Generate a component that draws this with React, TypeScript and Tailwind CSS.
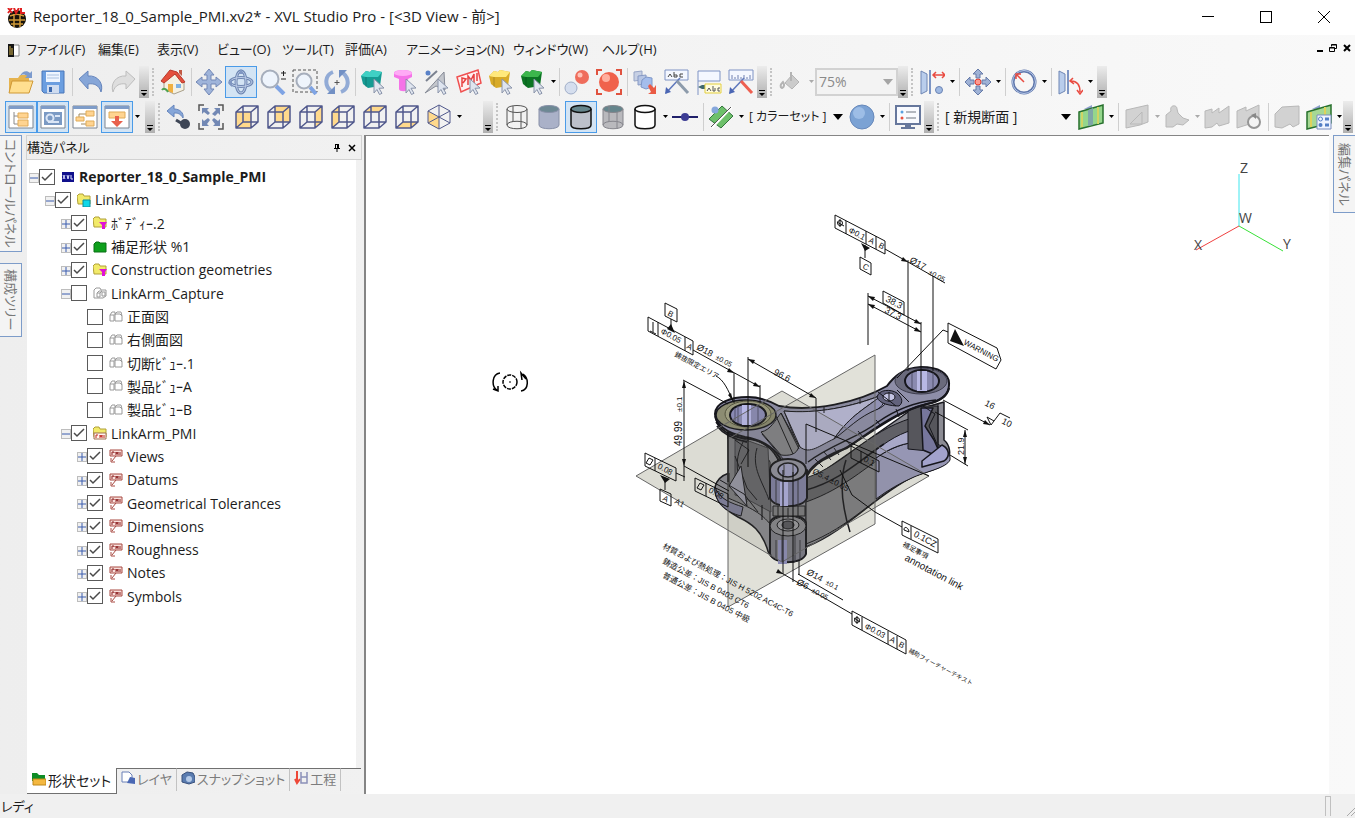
import type { ReactNode } from 'react';

const FONT = "font-['Open_Sans','Noto_Sans_CJK_JP',sans-serif]";

/* ---------- toolbar building blocks ---------- */

const Svg = ({ children }: { children: ReactNode }) => (
  <svg viewBox="0 0 26 26" className="size-[26px]" fill="none" aria-hidden="true">
    {children}
  </svg>
);

interface ToolProps {
  label: string;
  on?: boolean;
  children: ReactNode;
}

const Tool = ({ label, on, children }: ToolProps) => (
  <button
    type="button"
    aria-label={label}
    aria-pressed={on}
    className={
      on
        ? 'flex h-8 w-8 shrink-0 items-center justify-center border border-[#4a9be8] bg-[#d3e4f4]'
        : 'flex h-8 w-8 shrink-0 items-center justify-center'
    }
  >
    <Svg>{children}</Svg>
  </button>
);

const Sep = ({ wide }: { wide?: boolean }) => (
  <span className={wide ? 'flex h-7 w-[6px] shrink-0 justify-center' : 'flex h-7 w-1 shrink-0 justify-center'}>
    <span className="w-px bg-[#cfcfcf]" />
  </span>
);

const Grip = () => (
  <span className="flex h-7 w-2 shrink-0 justify-center">
    <span className="border-l-2 border-dotted border-[#c4c4c4]" />
  </span>
);

const Drop = ({ off }: { off?: boolean }) => (
  <button type="button" aria-label="More" className="flex h-8 w-2 shrink-0 items-center justify-center">
    <svg viewBox="0 0 5 3" className="h-[3px] w-[5px]" aria-hidden="true">
      <path d="M0 0h5L2.500 3z" fill={off ? '#aaa' : '#000'} />
    </svg>
  </button>
);

const Overflow = () => (
  <button
    type="button"
    aria-label="Toolbar options"
    className="flex h-8 w-[10px] shrink-0 items-end justify-center bg-linear-to-b from-[#ececec] to-[#b0b0b0] pb-[2px]"
  >
    <svg viewBox="0 0 6 6" className="size-[6px]" aria-hidden="true">
      <path d="M0 0h6v1H0zM0 3h6L3 6z" fill="#000" />
    </svg>
  </button>
);

const Caret = ({ off }: { off?: boolean }) => (
  <svg viewBox="0 0 10 6" className="pointer-events-none h-[6px] w-[10px] shrink-0" aria-hidden="true">
    <path d="M0 0h10L5 6z" fill={off ? '#a5a5a5' : '#000'} />
  </svg>
);

/* ---------- icon fragments ---------- */

const Pointer = () => (
  <path d="M14 10l10 9-5 .3 3 5-2.500 1.200-2.600-5L14 24z" fill="#dfe5ef" stroke="#8a94aa" />
);

const Block = ({ top, side }: { top: string; side: string }) => (
  <>
    <path d="M1 7l5-5 4 1 2-2 10 2-2 14-12 2-5-4z" fill={side} />
    <path d="M1 7l5-5 4 1 2-2 10 2-4 5H6z" fill={top} />
    <path d="M6 8v10" stroke="#0003" />
    <Pointer />
  </>
);

const Cube = ({ fill }: { fill: string }) => (
  <>
    <path d={fill} fill="#ffd98c" />
    <path
      d="M2 8h15v16H2zM2 8l7-6h15v16l-7 6M17 8l7-6M9 2v16h15M9 18l-7 6"
      stroke="#50588c"
      strokeWidth="1.500"
      strokeLinejoin="round"
    />
  </>
);

interface CylinderProps {
  body: string;
  top: string;
  line: string;
  heavy?: boolean;
  hidden?: boolean;
}

const Cylinder = ({ body, top, line, heavy, hidden }: CylinderProps) => (
  <>
    <path d="M3 5v16c0 5 20 5 20 0V5z" fill={body} />
    <ellipse cx="13" cy="5" rx="10" ry="3.500" fill={top} />
    <g stroke={line} strokeWidth={heavy ? 1.5 : 1}>
      <path d="M3 5v16c0 5 20 5 20 0V5" />
      <ellipse cx="13" cy="5" rx="10" ry="3.500" />
      {hidden && <path d="M3 21c0-5 20-5 20 0M9 2v16M17 8v17" />}
    </g>
  </>
);

const Pane = ({ children }: { children: ReactNode }) => (
  <>
    <path d="M1 2h24v22H1z" fill="#fff" stroke="#7d8591" />
    <path d="M1 2h24v3H1z" fill="#7e9cc8" />
    {children}
  </>
);

const Ghost = ({ d }: { d: string }) => (
  <path d={d} fill="#d2d2d2" stroke="#b8b8b8" strokeLinejoin="round" />
);

const Mirror = () => (
  <>
    <path d="M2 2l6 3v17l-6 3z" fill="#b9cdec" stroke="#6e86b4" />
    <path d="M10 1h2v24h-2z" fill="#7d95c4" />
  </>
);

const fourWay = 'M13 0l5 6h-3v5h5V8l6 5-6 5v-3h-5v5h3l-5 6-5-6h3v-5H6v3l-6-5 6-5v3h5V6H8z';

const RowOne = () => (
  <div className="flex h-[33px] items-center pl-[5px]">
    <Tool label="開く">
      <path d="M1 9h9l2-3h9v17H1z" fill="#e6b450" />
      <path d="M4 12h21l-4 12H1z" fill="#ffdf90" stroke="#cf9835" />
      <path d="M12 7c2-5 7-6 10-3l2-2v7h-7l2-2c-2-2-5-2-7 0z" fill="#7c9bce" />
    </Tool>
    <Tool label="保存">
      <path d="M2 2h22v22H4l-2-2z" fill="#6b9ee0" stroke="#4a76b8" />
      <path d="M6 3h14v10H6z" fill="#eef5ff" />
      <path d="M7 6h12M7 9h12" stroke="#a9c0e0" />
      <path d="M7 16h12v8H7z" fill="#cfdcf0" />
      <path d="M9 18h3v5H9z" fill="#3c68ad" />
    </Tool>
    <Sep wide />
    <Tool label="元に戻す">
      <path d="M1 10l9-8v5c10-1 16 8 13 16-2-7-7-9-13-8v5z" fill="#86a6d8" stroke="#6484bc" />
    </Tool>
    <Tool label="やり直す">
      <path d="M25 10l-9-8v5C6 6 0 15 3 23c2-7 7-9 13-8v5z" fill="#dedede" stroke="#bdbdbd" />
    </Tool>
    <Overflow />
    <Grip />
    <Tool label="ホーム">
      <path d="M4 12l8-9 12 9v9l-10 4-10-5z" fill="#f5f1e2" stroke="#a9a08a" />
      <path d="M1 12L10 1l7 2 8 10-3 1-7-9-11 9z" fill="#e4503c" stroke="#b83a2c" />
      <path d="M19 1h3v6l-3-3z" fill="#c25a44" />
      <path d="M8 15h5v9l-5-2z" fill="#f0b040" />
      <path d="M16 15h5v4h-5z" fill="#7fb2e4" />
      <path d="M2 21c2-3 5 0 6 2" stroke="#4fa352" strokeWidth="2" />
    </Tool>
    <Sep />
    <Tool label="移動">
      <path d={fourWay} fill="#9fb4da" stroke="#7287b5" />
    </Tool>
    <Tool label="回転" on>
      <g strokeWidth="3" stroke="#6f87b2">
        <ellipse cx="13" cy="13" rx="11" ry="4.500" />
        <ellipse cx="13" cy="13" rx="5" ry="11" />
      </g>
      <g stroke="#bdcde8">
        <ellipse cx="13" cy="13" rx="11" ry="4.500" />
        <ellipse cx="13" cy="13" rx="5" ry="11" />
      </g>
      <path d="M10 5l3-5 3 5zM4 10l-4 4 4 4z" fill="#7f96c2" />
    </Tool>
    <Tool label="ズーム">
      <path d="M16 17l8 8" stroke="#7fa4e4" strokeWidth="4" />
      <circle cx="10" cy="10" r="8.500" fill="#eef4fc" stroke="#a6aebc" strokeWidth="2" />
      <path d="M21 4h5M23.500 2v5M21 10h5" stroke="#222" />
    </Tool>
    <Tool label="範囲ズーム">
      <path d="M1 1h24v22H1z" stroke="#555" strokeDasharray="3 2" />
      <path d="M18 18l6 7" stroke="#7fa4e4" strokeWidth="4" />
      <circle cx="12" cy="12" r="7.500" fill="#eef4fc" stroke="#a6aebc" strokeWidth="2" />
    </Tool>
    <Tool label="回す">
      <path d="M9 3C1 6 0 16 7 22M17 23c8-3 9-13 2-19" stroke="#92abd6" strokeWidth="4" />
      <path d="M3 25h8v-8zM23 1h-8v8z" fill="#7290c4" />
      <path d="M13 11v5M10.500 13.500h5" stroke="#555" />
    </Tool>
    <Sep />
    <Tool label="パーツ選択">
      <Block top="#3fd0c4" side="#159b93" />
    </Tool>
    <Tool label="ボディ選択">
      <path d="M2 4c0-4 18-4 18 0v4l-4 2v10c0 3-9 3-9 0V10L2 8z" fill="#f573e8" />
      <ellipse cx="11" cy="4" rx="9" ry="3" fill="#ffaaf6" />
      <Pointer />
    </Tool>
    <Tool label="面選択">
      <path d="M1 24L20 3l1 18-9-4z" fill="#c3c6cc" stroke="#858a96" />
      <path d="M2 12L13 2" stroke="#7b8290" strokeWidth="2" />
      <circle cx="4" cy="4" r="2.500" fill="#5a82c8" />
      <Pointer />
    </Tool>
    <Tool label="PMI選択">
      <path d="M1 8l21-7 3 13-20 9z" fill="#fff0f0" stroke="#f05050" strokeWidth="1.500" />
      <path d="M6 18V9l4 1-3 4M12 16V7l3 4 3-6v9M21 4v8" stroke="#e84040" strokeWidth="1.500" />
      <Pointer />
    </Tool>
    <Tool label="グループ選択">
      <Block top="#ffe97c" side="#d8ab28" />
    </Tool>
    <Tool label="形状選択">
      <Block top="#3cb64c" side="#0b7423" />
    </Tool>
    <Drop />
    <Sep />
    <Tool label="表示切替">
      <circle cx="18" cy="8" r="7" fill="#ef6d5c" />
      <circle cx="16" cy="6" r="2.500" fill="#ffc3b8" />
      <circle cx="7" cy="19" r="6" fill="#d5deee" stroke="#a0aec8" />
    </Tool>
    <Tool label="干渉">
      <circle cx="13" cy="13" r="10" fill="#f0624c" />
      <circle cx="10" cy="9" r="4" fill="#ffae9e" />
      <path d="M1 6V1h5M20 1h5v5M25 20v5h-5M6 25H1v-5" stroke="#e0523f" strokeWidth="2" />
    </Tool>
    <Sep />
    <Tool label="コピー配置">
      <path d="M2 3l8-1v9l-8 1z" fill="#c7d0e4" stroke="#97a5c6" />
      <path d="M6 7l8-1v9l-8 1z" fill="#b6c5e4" stroke="#8699c4" />
      <path d="M10 11l4-3 6 1v9l-6 2-5-2z" fill="#a4bdec" stroke="#7f97c8" />
      <path d="M16 17l2-2 4 4 2-3v9h-8l3-2z" fill="#ea5b45" />
    </Tool>
    <Tool label="注記">
      <path d="M1 1h23v10H1z" fill="#f4f7ff" stroke="#7f93c4" />
      <path d="M4 8l2-3 2 3M10 3v5h3V6h-3M19 5h-3v3h3" stroke="#444" />
      <path d="M2 24L16 9" stroke="#5f78bc" strokeWidth="1.500" />
      <path d="M1 25l1-7 5 5z" fill="#4b66b4" />
      <path d="M13 12l11 12" stroke="#8d9bab" strokeWidth="3" />
    </Tool>
    <Tool label="ラベル">
      <path d="M2 2h22v10H2z" fill="#f4f7ff" />
      <path d="M2 26V2h22v10H2" stroke="#7f93c4" />
      <path d="M2 18l4-2h3v4H6z" fill="#40686e" />
      <path d="M9 15h16v9H9z" fill="#fffce0" stroke="#e4cf3c" />
      <path d="M11 22l2-3 2 3M17 17v5h2v-3M24 19h-2v3h2" stroke="#555" />
    </Tool>
    <Tool label="寸法">
      <path d="M1 1h24v10H1z" fill="#f4f7ff" stroke="#7f93c4" />
      <path d="M4 10V6M7 10V8M10 10V6M13 10V8M16 10V6M19 10V8M22 10V6" stroke="#7080b0" />
      <path d="M2 24L16 9" stroke="#5f78bc" strokeWidth="1.500" />
      <path d="M1 25l1-7 5 5z" fill="#4b66b4" />
      <path d="M13 12l11 12" stroke="#ee5f50" strokeWidth="3" />
    </Tool>
    <Overflow />
    <Grip />
    <Tool label="塗りつぶし">
      <path d="M7 14l7-8 7 7-7 7z" fill="#cbcbcb" stroke="#b4b4b4" />
      <path d="M13 3v9M5 13c-3 3-3 5-1 6 2-1 3-3 1-6z" stroke="#b4b4b4" strokeWidth="2" />
    </Tool>
    <Drop off />
    <label className="relative flex h-7 w-[83px] shrink-0 items-center border-2 border-[#d2d2d2] bg-[#f3f3f3]">
      <span className="sr-only">透過率</span>
      <select
        disabled
        className="h-6 w-full appearance-none bg-transparent pl-[2px] text-[14px] leading-6 text-[#8a8a8a] opacity-100"
      >
        <option>75%</option>
      </select>
      <span className="pointer-events-none absolute right-[3px]">
        <Caret off />
      </span>
    </label>
    <Overflow />
    <Grip />
    <Tool label="面間距離">
      <Mirror />
      <path d="M15 6h10M17 3l-3 3 3 3M23 3l3 3-3 3" stroke="#e94b41" strokeWidth="1.500" />
      <circle cx="20" cy="21" r="3.500" fill="#9fb9e2" stroke="#6b83b4" />
    </Tool>
    <Drop />
    <Sep wide />
    <Tool label="位置">
      <path
        d="M13 0l5 5h-3v4h-4V5H8zM13 26l-5-5h3v-4h4v4h3zM0 13l5-5v3h4v4H5v3zM26 13l-5-5v3h-4v4h4v3z"
        fill="#9fb2d6"
        stroke="#667ba8"
      />
      <circle cx="13" cy="13" r="3" fill="#ff9a90" stroke="#e43c30" />
    </Tool>
    <Drop />
    <Sep wide />
    <Tool label="半径">
      <circle cx="13" cy="13" r="11" stroke="#5f77ac" strokeWidth="3" />
      <circle cx="13" cy="13" r="11.500" stroke="#b8c9e8" />
      <path d="M13 13L6 6M5 10V5h5" stroke="#e94b41" strokeWidth="1.500" />
    </Tool>
    <Drop />
    <Sep wide />
    <Tool label="角度">
      <Mirror />
      <path d="M14 12c6 0 9 4 9 11M16 9l-3 3 4 3M20 21l3 4 3-4" stroke="#e94b41" strokeWidth="1.500" />
    </Tool>
    <Drop />
    <span className="w-[3px] shrink-0" />
    <Overflow />
  </div>
);

const RowTwo = () => (
  <div className="flex h-[36px] items-center pt-px pl-[5px]">
    <Tool label="ツリー" on>
      <Pane>
        <path d="M6 8v12h4M6 12h4" stroke="#8a8a8a" />
        <path d="M10 9h10v5H10zM10 16h10v6H10z" fill="#ffd491" stroke="#e0ab58" />
      </Pane>
    </Tool>
    <Tool label="イメージ" on>
      <Pane>
        <path d="M4 8h18v13H4z" fill="#7b9ac4" />
        <circle cx="10" cy="14" r="3.500" stroke="#dbe6f6" strokeWidth="2" />
        <path d="M15 12h5M8 18h11" stroke="#dbe6f6" strokeWidth="2" />
      </Pane>
    </Tool>
    <Tool label="構成">
      <Pane>
        <path d="M15 10H7v4M9 20h6" stroke="#a08a60" />
        <path d="M14 7h8v5h-8zM4 13h8v4H4zM14 17h8v5h-8z" fill="#ffd491" stroke="#e0ab58" />
      </Pane>
    </Tool>
    <Tool label="プロセス" on>
      <Pane>
        <path d="M5 8h16v6H5z" fill="#ffd491" stroke="#e0ab58" />
        <path d="M11 12h4v5h4l-6 6-6-6h4z" fill="#e8604c" />
      </Pane>
    </Tool>
    <Drop />
    <span className="w-1 shrink-0" />
    <Overflow />
    <Grip />
    <Tool label="視点戻し">
      <path d="M1 7l7-6v4c6 0 10 4 9 9-3-5-6-5-9-5v4z" fill="#86a6d8" stroke="#6484bc" />
      <circle cx="19" cy="20" r="5" fill="#3e4656" />
      <path d="M10 16l5 3" stroke="#3e4656" strokeWidth="3" />
    </Tool>
    <Tool label="全体表示">
      <path d="M1 7V1h5M20 1h5v6M25 19v6h-5M6 25H1v-6" stroke="#555" strokeWidth="1.500" />
      <path
        d="M4 4h7L9 6l3 3-2 2-4-3-2 2zM22 4v7l-2-2-3 3-3-2 4-4-2-2zM4 22v-7l2 2 4-3 2 2-3 4 2 2zM22 22h-7l2-2-3-4 2-2 4 3 2-2z"
        fill="#7288b4"
      />
    </Tool>
    <span className="w-1 shrink-0" />
    <Tool label="前">
      <Cube fill="M2 8h15v16H2z" />
    </Tool>
    <Tool label="後">
      <Cube fill="M9 2h15v16H9z" />
    </Tool>
    <Tool label="右">
      <Cube fill="M17 8l7-6v16l-7 6z" />
    </Tool>
    <Tool label="左">
      <Cube fill="M2 8l7-6v16l-7 6z" />
    </Tool>
    <Tool label="上">
      <Cube fill="M2 8l7-6h15l-7 6z" />
    </Tool>
    <Tool label="下">
      <Cube fill="M2 24l7-6h15l-7 6z" />
    </Tool>
    <Tool label="等角">
      <path d="M2 7l11 6v12L2 19z" fill="#ffd98c" />
      <path
        d="M13 1l11 6v12l-11 6-11-6V7zM2 7l11 6 11-6M13 13v12M13 1v12M2 19l11-6 11 6"
        stroke="#50588c"
        strokeLinejoin="round"
      />
    </Tool>
    <Drop />
    <span className="w-5 shrink-0" />
    <Overflow />
    <Grip />
    <Tool label="ワイヤー">
      <Cylinder body="none" top="none" line="#555" hidden />
    </Tool>
    <Tool label="シェーディング">
      <Cylinder body="#aab1c8" top="#6d8894" line="#8890a8" />
    </Tool>
    <Tool label="線付き" on>
      <Cylinder body="#bcc0ca" top="#65858c" line="#111" heavy />
    </Tool>
    <Tool label="隠線">
      <Cylinder body="#b9b9bd" top="#65858c" line="#85858c" hidden />
    </Tool>
    <Tool label="線画">
      <Cylinder body="#fff" top="#fff" line="#111" heavy />
    </Tool>
    <Drop />
    <Tool label="線">
      <path d="M0 13h26" stroke="#20206a" strokeWidth="2" />
      <circle cx="13" cy="13" r="4" fill="#3c3c94" />
    </Tool>
    <Sep />
    <Tool label="断面表示">
      <path d="M1 15L14 2l11 10-12 12z" fill="#6dc06a" stroke="#33753c" />
      <path d="M4 24L24 3" stroke="#fff" strokeWidth="2" />
      <path d="M3 23L23 3" stroke="#555" />
      <circle cx="7" cy="6" r="3.500" fill="#86a7dc" />
    </Tool>
    <Drop />
    <label className="relative flex h-7 w-[101px] shrink-0 items-center">
      <span className="sr-only">カラーセット</span>
      <select className="h-7 w-full appearance-none bg-transparent pl-1 text-[12px] leading-7 [font-feature-settings:'palt']">
        <option>[ カラーセット ]</option>
      </select>
      <span className="pointer-events-none absolute right-[3px]">
        <Caret />
      </span>
    </label>
    <Tool label="球">
      <circle cx="13" cy="13" r="12" fill="#7ba2d4" stroke="#6788ba" />
      <circle cx="10" cy="9" r="6" fill="#9dbde6" />
    </Tool>
    <Drop />
    <Sep wide />
    <Tool label="モニター">
      <path d="M1 2h24v18H1z" fill="#f8faff" stroke="#66779c" strokeWidth="2" />
      <path d="M10 20h6v3h4v2H6v-2h4z" fill="#66779c" />
      <path d="M11 8h10M11 14h10" stroke="#6d7480" />
      <circle cx="7" cy="8" r="1.500" fill="#58a0e0" />
      <circle cx="7" cy="14" r="1.500" fill="#e85040" />
    </Tool>
    <Overflow />
    <Grip />
    <label className="relative flex h-7 w-[133px] shrink-0 items-center">
      <span className="sr-only">断面</span>
      <select className="h-7 w-full appearance-none bg-transparent pl-[3px] text-[14px] leading-7">
        <option>[ 新規断面 ]</option>
      </select>
      <span className="pointer-events-none absolute right-1">
        <Caret />
      </span>
    </label>
    <Tool label="断面作成">
      <path d="M6 5l8-4v5z" fill="#8d9fcb" />
      <path d="M1 8l24-7v18L1 25z" fill="#94d68c" stroke="#27702d" strokeWidth="1.500" />
      <path d="M10 6l5-2v17l-5 1z" fill="#7fa6a8" />
      <path d="M4 8v15M20 3v17" stroke="#d0d464" strokeWidth="2" />
    </Tool>
    <Drop />
    <Sep wide />
    <Tool label="断面編集">
      <Ghost d="M2 6l22-5v17l-8 3-14 3zM6 20l12-12v12z" />
    </Tool>
    <Drop off />
    <Tool label="断面移動">
      <Ghost d="M2 23V11l5-4c-2-6 6-7 6-2l1 4 5 5 6 2-6 5-6-1-4 3z" />
    </Tool>
    <Drop off />
    <Tool label="断面反転">
      <Ghost d="M1 7l7-2v4l7-5v5l10-7v17l-10 3-2-3-5 4-7 1z" />
    </Tool>
    <Tool label="断面更新">
      <Ghost d="M1 7l9-4v4l13-6v16L1 24z" />
      <circle cx="18" cy="18" r="6" fill="#f3f3f3" stroke="#959595" strokeWidth="2" />
      <path d="M15 11l5-2v6z" fill="#888" />
    </Tool>
    <Sep wide />
    <Tool label="断面削除">
      <Ghost d="M1 10l7-7 17-1v18l-6 3-3-3-8 4-7-1z" />
    </Tool>
    <Tool label="断面リスト">
      <path d="M6 5l8-4v5z" fill="#8d9fcb" />
      <path d="M1 8l24-7v18L1 25z" fill="#a6d894" stroke="#27702d" strokeWidth="1.500" />
      <path d="M5 8v15M19 3v8" stroke="#ded25a" strokeWidth="2" />
      <path d="M11 11h14v14H11z" fill="#f0f5ff" stroke="#7a8dbe" />
      <circle cx="14.500" cy="15" r="2" stroke="#547fc4" />
      <circle cx="14.500" cy="21" r="2" fill="#547fc4" />
      <path d="M19 15h4M19 21h4" stroke="#547fc4" strokeWidth="3" />
    </Tool>
    <Drop />
    <Overflow />
  </div>
);

/* ---------- window chrome ---------- */

const TitleBar = () => (
  <header className="flex h-[35px] shrink-0 items-center bg-white pl-[7px]">
    <svg viewBox="0 0 20 20" className="size-5" aria-hidden="true">
      <circle cx="10" cy="11" r="9" fill="#17120a" />
      <path d="M3 8c4-2 10-2 14 0M2 12h16M4 16h12M7 6v13M13 6v13" stroke="#d09a38" strokeWidth="1.500" fill="none" />
      <path d="M1 0l4 5M5 0L1 5M7 0l2 5 3-5M14 0v5h4" stroke="#e02020" strokeWidth="2" fill="none" />
    </svg>
    <h1 className="flex-1 pb-[2px] pl-[6px] text-[15px] whitespace-nowrap">
      Reporter_18_0_Sample_PMI.xv2* - XVL Studio Pro - [&lt;3D View - 前&gt;]
    </h1>
    <div className="flex items-center gap-[46px] pr-[25px] pb-[2px]">
      <button type="button" aria-label="Minimize" className="flex h-4 w-3 items-center">
        <span className="h-px w-full bg-black" />
      </button>
      <button type="button" aria-label="Maximize" className="size-3 border border-black" />
      <button type="button" aria-label="Close">
        <svg viewBox="0 0 12 12" className="size-3" stroke="#000" aria-hidden="true">
          <path d="M0 0l12 12M12 0L0 12" />
        </svg>
      </button>
    </div>
  </header>
);

const menus = [
  'ファイル(F)',
  '編集(E)',
  '表示(V)',
  'ビュー(O)',
  'ツール(T)',
  '評価(A)',
  'アニメーション(N)',
  'ウィンドウ(W)',
  'ヘルプ(H)',
];

const MenuBar = () => (
  <nav className="flex h-[30px] items-center pr-1 pl-2">
    <svg viewBox="0 0 12 13" className="h-[13px] w-3" aria-hidden="true">
      <path d="M0 0h6v13H0z" fill="#141414" />
      <path d="M2 2v9M4 4v7" stroke="#d8b850" />
      <path d="M6 1h5v11H6" fill="#fff" stroke="#888" />
    </svg>
    <div className="grid flex-1 grid-cols-[72px_59px_60px_65px_63px_61px_107px_89px_auto] pl-[6px]">
      {menus.map((menu) => (
        <button
          key={menu}
          type="button"
          className="text-left text-[13px] whitespace-nowrap [font-feature-settings:'palt']"
        >
          {menu}
        </button>
      ))}
    </div>
    <div className="flex items-center gap-[6px] pb-1">
      <button type="button" aria-label="Minimize view" className="flex h-2 w-[6px] items-end">
        <span className="h-[2px] w-full bg-black" />
      </button>
      <button type="button" aria-label="Restore view">
        <svg viewBox="0 0 8 8" className="size-2" fill="none" stroke="#000" aria-hidden="true">
          <path d="M2.500 2.500v-2h5v4h-2M.5 3.500h5v4h-5zM.5 4h5M2.500 1h5" />
        </svg>
      </button>
      <button type="button" aria-label="Close view">
        <svg viewBox="0 0 8 8" className="size-2" stroke="#000" strokeWidth="2" aria-hidden="true">
          <path d="M1 1l6 6M7 1L1 7" />
        </svg>
      </button>
    </div>
  </nav>
);

/* ---------- structure tree ---------- */

type TreeIcon = 'xvl' | 'part' | 'body' | 'green' | 'capture' | 'view' | 'pmiFolder' | 'pmi';

interface TreeNode {
  level: 0 | 1 | 2 | 3;
  label: string;
  icon: TreeIcon;
  checked: boolean;
  open?: boolean;
}

const nodes: TreeNode[] = [
  { level: 0, label: 'Reporter_18_0_Sample_PMI', icon: 'xvl', checked: true, open: true },
  { level: 1, label: 'LinkArm', icon: 'part', checked: true, open: true },
  { level: 2, label: 'ﾎﾞﾃﾞｨｰ.2', icon: 'body', checked: true, open: false },
  { level: 2, label: '補足形状 %1', icon: 'green', checked: true, open: false },
  { level: 2, label: 'Construction geometries', icon: 'body', checked: true, open: false },
  { level: 2, label: 'LinkArm_Capture', icon: 'capture', checked: false, open: true },
  { level: 3, label: '正面図', icon: 'view', checked: false },
  { level: 3, label: '右側面図', icon: 'view', checked: false },
  { level: 3, label: '切断ﾋﾞｭｰ.1', icon: 'view', checked: false },
  { level: 3, label: '製品ﾋﾞｭｰA', icon: 'view', checked: false },
  { level: 3, label: '製品ﾋﾞｭｰB', icon: 'view', checked: false },
  { level: 2, label: 'LinkArm_PMI', icon: 'pmiFolder', checked: true, open: true },
  { level: 3, label: 'Views', icon: 'pmi', checked: true, open: false },
  { level: 3, label: 'Datums', icon: 'pmi', checked: true, open: false },
  { level: 3, label: 'Geometrical Tolerances', icon: 'pmi', checked: true, open: false },
  { level: 3, label: 'Dimensions', icon: 'pmi', checked: true, open: false },
  { level: 3, label: 'Roughness', icon: 'pmi', checked: true, open: false },
  { level: 3, label: 'Notes', icon: 'pmi', checked: true, open: false },
  { level: 3, label: 'Symbols', icon: 'pmi', checked: true, open: false },
];

const indent = ['pl-[2px]', 'pl-[18px]', 'pl-[34px]', 'pl-[50px]'];

const folder = <path d="M0 3l2-2h4l1 2h6v8H1z" fill="#f2ea6a" stroke="#b0a038" />;

const treeIcons: Record<TreeIcon, ReactNode> = {
  xvl: (
    <>
      <path d="M1 2h12v10H1z" fill="#10108c" />
      <path d="M2 5l2 4M4 5L2 9M6 5l1 4 1-4M10 5v4h2" stroke="#dfe2ff" />
    </>
  ),
  part: (
    <>
      {folder}
      <path d="M6 7h7v7H6z" fill="#10d8e8" stroke="#0c8c9c" />
    </>
  ),
  body: (
    <>
      {folder}
      <path d="M6 6h8l-2 3v4H9V9z" fill="#e010d8" />
    </>
  ),
  green: <path d="M1 4l2-2h3l1 1h6v9H1z" fill="#0ea01c" stroke="#087014" />,
  capture: <path d="M1 4l2-2h4l1 2h5v6l-3 2H1zM4 7h3v4H4zM4 7l2-2h3L7 7M9 6h3v4H9z" stroke="#999" />,
  view: <path d="M1 5l2-3h3v3M1 5h4v6H1zM6 4h5l2 2v5H6zM6 4l2-2h4l1 4" stroke="#999" />,
  pmiFolder: (
    <>
      {folder}
      <path d="M1 7h12v6H1z" fill="#fff5f0" stroke="#a07050" />
      <path d="M3 12V9h2M7 12V9l1 2 1-2v3M11 9v3" stroke="#c02820" />
    </>
  ),
  pmi: (
    <>
      <path d="M1 1h12v6H1z" fill="#f8e0dc" stroke="#a84840" />
      <path d="M3 6V3h2v1M7 6V3l1 2 1-2v3M11 3v3" stroke="#8c2020" />
      <path d="M7 7l-4 5M2 9v4h4" stroke="#a84840" />
    </>
  ),
};

const TreeRow = ({ node }: { node: TreeNode }) => (
  <li className={`flex flex-1 items-center ${indent[node.level]}`}>
    {node.open === undefined ? (
      <span className="w-[10px]" />
    ) : (
      <button
        type="button"
        aria-label={node.open ? 'Collapse' : 'Expand'}
        className="mt-[2px] flex size-[10px] items-center justify-center border border-[#bdbdbd] bg-[#f1f1f1]"
      >
        <svg viewBox="0 0 8 8" className="size-2 shrink-0" stroke="#3a5cae" aria-hidden="true">
          <path d={node.open ? 'M0 4h8' : 'M0 4h8M4 0v8'} />
        </svg>
      </button>
    )}
    <label className="flex items-center whitespace-nowrap">
      <span className="relative flex size-4">
        <input
          type="checkbox"
          defaultChecked={node.checked}
          className="peer size-4 appearance-none border border-[#5a5a5a] bg-white"
        />
        <svg
          viewBox="0 0 16 16"
          className="pointer-events-none absolute inset-0 hidden size-4 peer-checked:block"
          fill="none"
          stroke="#4a4a4a"
          strokeWidth="1.500"
          aria-hidden="true"
        >
          <path d="M3 8l3 3 7-7" />
        </svg>
      </span>
      <svg viewBox="0 0 14 14" className="ml-[6px] size-[14px]" fill="none" aria-hidden="true">
        {treeIcons[node.icon]}
      </svg>
      <span className={node.level === 0 ? 'pl-1 text-[14px] font-bold' : 'pl-1 text-[14px]'}>{node.label}</span>
    </label>
  </li>
);

const bottomTabs = [
  {
    label: '形状セット',
    icon: (
      <>
        <path d="M0 1h5l2 2h6v6H0z" fill="#0e8c26" />
        <path d="M1 7h13v6H1z" fill="#f4b840" stroke="#c08818" />
      </>
    ),
  },
  {
    label: 'レイヤ',
    icon: (
      <>
        <path d="M1 1h7l3 3v7H1z" fill="#fff" stroke="#6a80b8" />
        <path d="M6 12l3-6 5 1v6z" fill="#4a68b4" />
      </>
    ),
  },
  {
    label: 'スナップショット',
    icon: (
      <>
        <path d="M1 4l5-3 6 1 2 4v5l-6 2-7-2z" fill="#5a7cb0" stroke="#38507c" />
        <circle cx="8" cy="8" r="3" fill="#b4cae8" />
      </>
    ),
  },
  {
    label: '工程',
    icon: (
      <>
        <path d="M3 0v10M1 8l2 4 3-4" stroke="#ee4838" strokeWidth="2" />
        <path d="M7 1v11h6V1M7 6h6" stroke="#8b90b8" strokeWidth="1.500" />
      </>
    ),
  },
];

const StructurePanel = () => (
  <aside className="flex w-[340px] shrink-0 flex-col">
    <div className="mx-[2px] flex h-[25px] shrink-0 items-center gap-2 border border-[#d2d2d2] pr-[5px]">
      <h2 className="flex-1 text-[13px] [font-feature-settings:'palt']">構造パネル</h2>
      <button type="button" aria-label="Pin">
        <svg viewBox="0 0 6 8" className="h-2 w-[6px]" fill="none" stroke="#000" aria-hidden="true">
          <path d="M1.500 0v4.500M1 .5h3.500M0 4.500h6M3 5v3" />
          <path d="M4 0v5" strokeWidth="2" />
        </svg>
      </button>
      <button type="button" aria-label="Close panel">
        <svg viewBox="0 0 8 8" className="size-2" stroke="#000" strokeWidth="1.500" aria-hidden="true">
          <path d="M1 1l6 6M7 1L1 7" />
        </svg>
      </button>
    </div>
    <div className="mr-[8px] ml-[3px] flex-1 bg-white pt-[5px]">
      <ul className="flex h-[443px] flex-col">
        {nodes.map((node) => (
          <TreeRow key={node.label} node={node} />
        ))}
      </ul>
    </div>
    <div className="mx-[3px] flex h-[26px] shrink-0" role="tablist">
      {bottomTabs.map((tab, i) => (
        <button
          key={tab.label}
          type="button"
          role="tab"
          aria-selected={i === 0}
          className={
            i === 0
              ? 'flex items-center gap-[2px] border-r border-b border-[#707070] bg-white px-[5px] text-[14px] [font-feature-settings:"palt"]'
              : 'mb-[3px] flex items-center gap-[2px] border-t border-r border-t-[#707070] border-r-[#c2c2c2] px-1 text-[13px] text-[#7c7c7c] [font-feature-settings:"palt"]'
          }
        >
          <svg viewBox="0 0 14 14" className="mb-1 size-[14px]" fill="none" aria-hidden="true">
            {tab.icon}
          </svg>
          {tab.label}
        </button>
      ))}
      <span className="h-px flex-1 bg-[#707070]" />
    </div>
  </aside>
);

/* ---------- 3D view ---------- */

interface NoteProps {
  x: number;
  y: number;
  children: string;
  size?: number;
}

/* annotation text running along the isometric axis */
const Note = ({ x, y, children, size = 9 }: NoteProps) => (
  <text transform={`translate(${x} ${y}) rotate(28)`} fontSize={size} fill="#111">
    {children}
  </text>
);

const UprightNote = ({ x, y, children, size = 9 }: NoteProps) => (
  <text transform={`translate(${x} ${y}) rotate(-90)`} fontSize={size} fill="#111">
    {children}
  </text>
);

const LinkArm = () => (
  <g stroke="#16161c" strokeWidth="1" strokeLinejoin="round">
    {/* lower flange and web */}
    <path
      d="M715 487c2-9 8-12 14-14l-1-41h40l30 38 10 12 50-35 50-35 36-10v38c6 5 7 14 4 20-5 8-20 11-34 16-40 20-66 54-108 71-1 10-6 16-18 15-13-1-19-5-21-14-6-17-14-24-29-31-14-8-24-16-23-30z"
      fill="#8c8c94"
      strokeWidth="1.500"
    />
    <path d="M728 432c14 8 30 8 42 30v62c-8-10-18-16-42-26z" fill="#7c7c82" />
    <path d="M735 436l33 12 3 64c-14-7-24-14-36-17z" fill="#65656c" stroke="#3c3c42" />
    <path d="M735 456l12 32 10 12M743 442c-10 20-6 36 4 60M757 448c-6 20 6 34 12 52M735 440l14 10-8 14" fill="none" />
    <path d="M715 487c4 12 16 16 28 20l-2 9c-16-4-27-15-26-29z" fill="#7e7e9c" />
    <path d="M741 466l-12 20 18 20z" fill="#9a9aac" />
    <path d="M720 480l24 14 14 18M729 473v14" fill="none" />
    <path d="M806 478c40-14 60-46 106-60v50c-40 14-60 44-106 62z" fill="#606066" />
    <path d="M806 502c40-14 62-38 78-45 14-8 34-14 46-15 14 4 20 10 19 18-4 8-22 11-36 17-38 18-62 50-107 67z" fill="#808086" />
    <path d="M876 458c20-14 40-18 55-16 14 4 20 10 19 18-4 8-22 11-36 17-14 6-26 13-38 22z" fill="#9696b4" />
    <path d="M876 450c18-14 32-20 46-22v14c-18 0-32 6-46 16z" fill="#a8a8c8" />
    <path d="M846 460c-6 18-6 40 4 72M806 490c36-10 56-32 78-46" fill="none" strokeWidth="1.500" />
    {/* right column */}
    <path d="M908 406h30v46l-30-3z" fill="#56565c" />
    <path d="M921 408h12l-8 18 9 14 8 18-19-8z" fill="#76769c" strokeWidth="1.500" />
    <path d="M922 461l20-16c8 4 8 12 2 16l-22 6z" fill="#a2a2cc" strokeWidth="1.500" />
    <path d="M923 406l12 8-6 12 8 18M938 404v44" fill="none" />
    {/* upper flange */}
    <path
      d="M715 414c0-11 15-17 33-17 12 0 22 4 31 9 34 6 78-3 108-20 6-8 15-18 34-19 17 0 29 6 28 18 0 10-9 16-22 19-30 7-56 27-80 44-18 6-32 14-40 26l-22-4c-6-22-22-30-40-33-19-4-30-13-30-23z"
      fill="#8e8ea8"
      strokeWidth="2"
    />
    <path d="M715 416c2 14 14 20 30 22 20 3 30 12 36 30l7 4" fill="none" />
    <path d="M716 422c8 12 20 16 32 17 18 2 28 12 34 28" fill="none" strokeWidth="1.500" />
    <path d="M717 426c8 10 20 14 30 16M949 388c-2 10-12 14-22 16-34 8-66 38-96 52-12 5-20 12-24 20" fill="none" strokeWidth="2" />
    <path d="M784 411c40 4 78-8 100-17 5 3 4 10-4 14-30 12-46 28-66 38-11 5-14 2-18-5z" fill="#a9a9d0" />
    <path d="M784 411l16 36c10 8 20-2 34-8 16-24 34-32 48-44-30 12-66 19-98 16z" fill="#b9b9d8" />
    <path d="M834 439c16-24 34-32 48-44 4 4 2 10-4 14-20 8-30 20-44 30z" fill="#9292b4" />
    <path d="M761 432c10-2 14-12 20-19l18 33c-2 9-10 10-18 9z" fill="#85858c" />
    <path d="M781 413l18 36M776 416l17 38M762 434l22 26M824 407v6M860 399v5" fill="none" />
    <path d="M815 459l8 8M824 452l7 8M834 448l5 7M846 440l6 7M858 431l6 7M876 420l5 6M896 409l3 8" fill="none" />
    <path d="M808 462c24-18 50-24 70-40 20-14 38-20 58-22" fill="none" strokeWidth="1.500" />
    {/* pocket beside the right boss */}
    <path d="M877 397c2-8 14-8 20-4 6 5 6 10 2 13-8 0-20-2-22-9z" fill="#62627c" />
    <ellipse cx="889" cy="397" rx="6" ry="4" fill="#c4c4e4" />
    <path d="M889 392v10M897 390l12 12M878 392l18 14" fill="none" />
    {/* bosses */}
    <ellipse cx="746" cy="415" rx="30" ry="15" fill="#8c8c72" strokeWidth="1.500" />
    <ellipse cx="748" cy="414" rx="23" ry="13" fill="#9c9c80" stroke="#555540" />
    <ellipse cx="748" cy="415" rx="18" ry="11" fill="#8a8ab4" strokeWidth="2" />
    <path d="M742 405h9v20h-9z" fill="#b8b8e8" stroke="none" />
    <path d="M735 408v13M738 406v17M758 406v17" stroke="#50506c" />
    <ellipse cx="921" cy="381" rx="26" ry="13" fill="#6a6a7c" stroke="#3c3c4c" />
    <ellipse cx="922" cy="381" rx="17" ry="11" fill="#8a8ab0" strokeWidth="2" />
    <path d="M917 371h10v20h-10z" fill="#b8b8e4" stroke="none" />
    <path d="M912 373v16M933 373v16" stroke="#50506c" />
    {/* front lugs */}
    <path d="M770 524c0-12 36-12 36 0v30c-4 11-32 11-36 0z" fill="#7c7c88" strokeWidth="2" />
    <path d="M778 540h9v24h-9z" fill="#9090c0" stroke="none" />
    <path d="M776 540v20M782 536v26M795 536v26M800 540v20" stroke="#33333c" />
    <ellipse cx="788" cy="526" rx="18" ry="10" fill="#8a8a90" />
    <ellipse cx="788" cy="525" rx="11" ry="6" fill="#9c9ca4" />
    <ellipse cx="788" cy="525" rx="6" ry="4" fill="#55555e" />
    <path d="M773 506h32v10h-32zM778 506v10M788 508v10M798 506v10" fill="#7c7c82" />
    <path d="M770 470v28c4 11 33 11 37 0v-28z" fill="#8080a8" strokeWidth="2" />
    <path d="M780 482h8v24h-8z" fill="#b4b4ea" stroke="none" />
    <path d="M776 480v24M798 480v25" stroke="#33333c" />
    <ellipse cx="788" cy="470" rx="18" ry="11" fill="#9494a2" strokeWidth="2" />
    <ellipse cx="788" cy="470" rx="10" ry="7" fill="#a2a2c8" strokeWidth="1.500" />
    <path d="M784 465v10M793 465v10" stroke="#333" />
  </g>
);

const Annotations = () => (
  <g stroke="#111" strokeWidth="1" fill="none">
    {/* leaders and dimension lines */}
    <path d="M885 249l23 13 37 21M908 260v111M933 276v95M868 293v52M921 322v68M868 296l53 28M868 304l53 28" />
    <path d="M943 400l47 25M935 412l33 18M950 455l18 11M965 430v34M897 378l46-48 5 2" />
    <path d="M693 350l67 37M734 373v30M760 385v18M748 357v110M748 359l68 39v34M716 376c8 4 12 14 17 25" />
    <path d="M683 380l45 24M684 381v100M684 466l45 25M676 473l9 4M671 319v10M665 479v11M865 245v13" />
    <path d="M806 424v40M806 424l123 52M728 432v50M783 470v104M793 472v110M799 560v15" />
    <path d="M778 571l74 43M798 574l45 26M875 512l27 15M840 470l12 25 23 17M762 520v-15" />
    {/* frames */}
    <path d="M835 215l50 26v13l-50-26zM846 221v13M866 231v13M876 236v13M860 257l11 6v12l-11-6z" />
    <path d="M837 222l7 4M840 219v8M653 322v10M650 331l6 3M883 291l21 11v13l-21-12z" />
    <path d="M948 323l49 25 4 12-5 9-48-26z" />
    <path d="M665 303l12 6v13l-12-6zM648 317l45 24v14l-45-24zM658 322v14M685 337v14" />
    <path d="M645 453l31 15v13l-31-15zM655 458v13M660 489l11 5v12l-11-5zM646 463l3-5 4 2-3 5z" />
    <path d="M695 478l33 16v13l-33-16zM706 483v13M697 488l3-5 4 2-3 5z" />
    <path d="M851 446l28 15v11l-28-14zM861 451v12" />
    <path d="M902 521l36 18v14l-36-18zM911 526v13M904 530c0-5 5-2 5 2z" />
    <path d="M852 611l54 29v14l-54-29zM862 617v13M888 631v13M897 636v13M854 618l6 4M857 616v8" />
    <path d="M987 417l4 8 9-12 10 5M987 417l7 4" />
    <circle cx="840" cy="223" r="2.500" />
    <circle cx="857" cy="620" r="2.500" />
    {/* arrow heads */}
    <g fill="#111" stroke="none">
      <path d="M861 243l9 5-5 3zM667 329l8 4-4-9zM660 475l10 4-5 4zM950 341l5-12 9 17z" />
      <path d="M908 262l-7-1 2-4zM868 296l7 1-2 4zM921 324l-7-1 2-4zM921 332l-7-1 2-4zM868 304l7 1-2 4z" />
      <path d="M734 373l-7-1 2-4zM760 387l-7-1 2-4zM748 359l7 1-2 4zM816 398l-7-1 2-4zM990 425l-7-1 2-4z" />
      <path d="M684 381l2 7h-4zM684 466l2-7h-4zM965 430l2 7h-4zM965 464l2-7h-4zM733 401l-5-6 3-2zM783 574l-7-1 2-4z" />
    </g>
    <g stroke="none" className="font-['Liberation_Sans','Noto_Sans_CJK_JP',sans-serif]">
      <Note x={848} y={232} size={8}>Φ0.1</Note>
      <Note x={868} y={242} size={8}>A</Note>
      <Note x={878} y={247} size={8}>B</Note>
      <Note x={862} y={268} size={8}>C</Note>
      <Note x={909} y={262}>Ø17</Note>
      <Note x={928} y={274} size={7}>±0.05</Note>
      <Note x={885} y={301}>38.3</Note>
      <Note x={884} y={312}>37.3</Note>
      <Note x={963} y={344} size={8}>WARNING</Note>
      <Note x={984} y={405}>16</Note>
      <Note x={1001} y={423}>10</Note>
      <UprightNote x={964} y={455}>21.9</UprightNote>
      <Note x={667} y={315} size={8}>B</Note>
      <Note x={660} y={333} size={8}>Φ0.05</Note>
      <Note x={686} y={348} size={8}>A</Note>
      <Note x={696} y={349}>Ø18</Note>
      <Note x={715} y={359} size={7}>±0.05</Note>
      <Note x={674} y={356} size={7}>鋳抜限定エリア</Note>
      <Note x={773} y={374}>96.6</Note>
      <UprightNote x={682} y={446} size={10}>49.99</UprightNote>
      <UprightNote x={682} y={412} size={8}>±0.1</UprightNote>
      <Note x={657} y={468} size={8}>0.08</Note>
      <Note x={662} y={500} size={8}>A</Note>
      <Note x={674} y={503} size={8}>A1</Note>
      <Note x={708} y={492} size={8}>0.08</Note>
      <Note x={863} y={461} size={8}>0.1</Note>
      <Note x={812} y={473} size={8}>Ø5.4 ±0.05</Note>
      <Note x={913} y={536}>0.1CZ</Note>
      <Note x={902} y={546} size={7}>補足事項</Note>
      <Note x={904} y={560} size={10}>annotation link</Note>
      <Note x={806} y={574}>Ø14</Note>
      <Note x={825} y={584} size={7}>±0.1</Note>
      <Note x={796} y={584}>Ø6</Note>
      <Note x={811} y={592} size={7}>±0.05</Note>
      <Note x={864} y={628} size={8}>Φ0.03</Note>
      <Note x={889} y={641} size={8}>A</Note>
      <Note x={898} y={646} size={8}>B</Note>
      <Note x={908} y={652} size={6}>補助フィーチャーテキスト</Note>
      <Note x={662} y={548} size={8}>材質および熱処理：JIS H 5202 AC4C-T6</Note>
      <Note x={662} y={563} size={8}>鋳造公差：JIS B 0403 CT6</Note>
      <Note x={662} y={577} size={8}>普通公差：JIS B 0405 中級</Note>
    </g>
  </g>
);

const View3D = () => (
  <main className="min-w-0 flex-1 border-t border-l-2 border-[#858585] bg-white">
    <svg
      viewBox="366 136 963 658"
      preserveAspectRatio="xMinYMin meet"
      className="block h-full w-full"
      role="img"
      aria-label="LinkArm 3D model"
    >
      <path d="M728 439l147-84v169l-147 83z" fill="#f0f0e9" />
      <path d="M636 476l146-85 147 85-147 86z" fill="#e6e6e0" />
      <LinkArm />
      <path d="M728 439l147-84v169l-147 83z" fill="#60604c" fillOpacity="0.100" stroke="#666" />
      <path d="M636 476l146-85 147 85-147 86z" fill="#60604c" fillOpacity="0.080" stroke="#666" />
      <Annotations />
      {/* orientation axes */}
      <path d="M1239 226v-52" stroke="#3fe6ee" />
      <path d="M1239 226l-43 24" stroke="#f04040" />
      <path d="M1239 226l44 25" stroke="#38e038" />
      <g fill="#444" fontSize="14" className="font-['Open_Sans',sans-serif]">
        <text x="1240" y="173">Z</text>
        <text x="1239" y="223">W</text>
        <text x="1194" y="250">X</text>
        <text x="1283" y="249">Y</text>
      </g>
      {/* rotate cursor */}
      <g fill="none" stroke="#000" strokeWidth="1.500">
        <circle cx="510" cy="382" r="7" strokeDasharray="4 1" />
        <path d="M500 373c-8 1-9 13-3 17M521 391c8-1 8-13 2-17M493 389l5 2v-5M526 379l-5-6 1 7" />
      </g>
      <path d="M509 382h2" stroke="#000" />
    </svg>
  </main>
);

const sideTab =
  'border border-[#7d9cc9] bg-[#f4f4f4] text-[#777] text-[13px] whitespace-nowrap [writing-mode:vertical-rl] [text-orientation:sideways] [font-feature-settings:"palt"]';

export default function App() {
  return (
    <div
      className={`flex h-screen flex-col overflow-hidden bg-linear-to-r from-[#eeeeee] to-[#f9f9f9] text-[#1c1c1c] ${FONT}`}
    >
      <TitleBar />
      <MenuBar />
      <RowOne />
      <RowTwo />
      <div className="flex min-h-0 flex-1 pt-px">
        <div className="flex w-6 shrink-0 flex-col items-start gap-[11px]">
          <button type="button" className={`${sideTab} h-[117px] w-[22px] border-l-0`}>
            コントロールパネル
          </button>
          <button type="button" className={`${sideTab} h-[74px] w-[22px] border-l-0`}>
            構成ツリー
          </button>
        </div>
        <StructurePanel />
        <View3D />
        <div className="flex w-[26px] shrink-0 flex-col items-end">
          <button type="button" className={`${sideTab} h-[78px] w-[22px] border-r-0`}>
            編集パネル
          </button>
        </div>
      </div>
      <footer className="flex h-6 shrink-0 items-center justify-between bg-[#f0f0f0] pl-[1px] text-[13px] [font-feature-settings:'palt']">
        <span className="pt-[2px]">レディ</span>
        <span className="flex h-5 w-[30px] items-end justify-between">
          <span className="h-5 w-[6px] border border-b-0 border-[#c0c0c0]" />
          <svg viewBox="0 0 8 8" className="size-2" stroke="#aaa" aria-hidden="true">
            <path d="M0 8l8-8M4 8l4-4" />
          </svg>
        </span>
      </footer>
    </div>
  );
}
